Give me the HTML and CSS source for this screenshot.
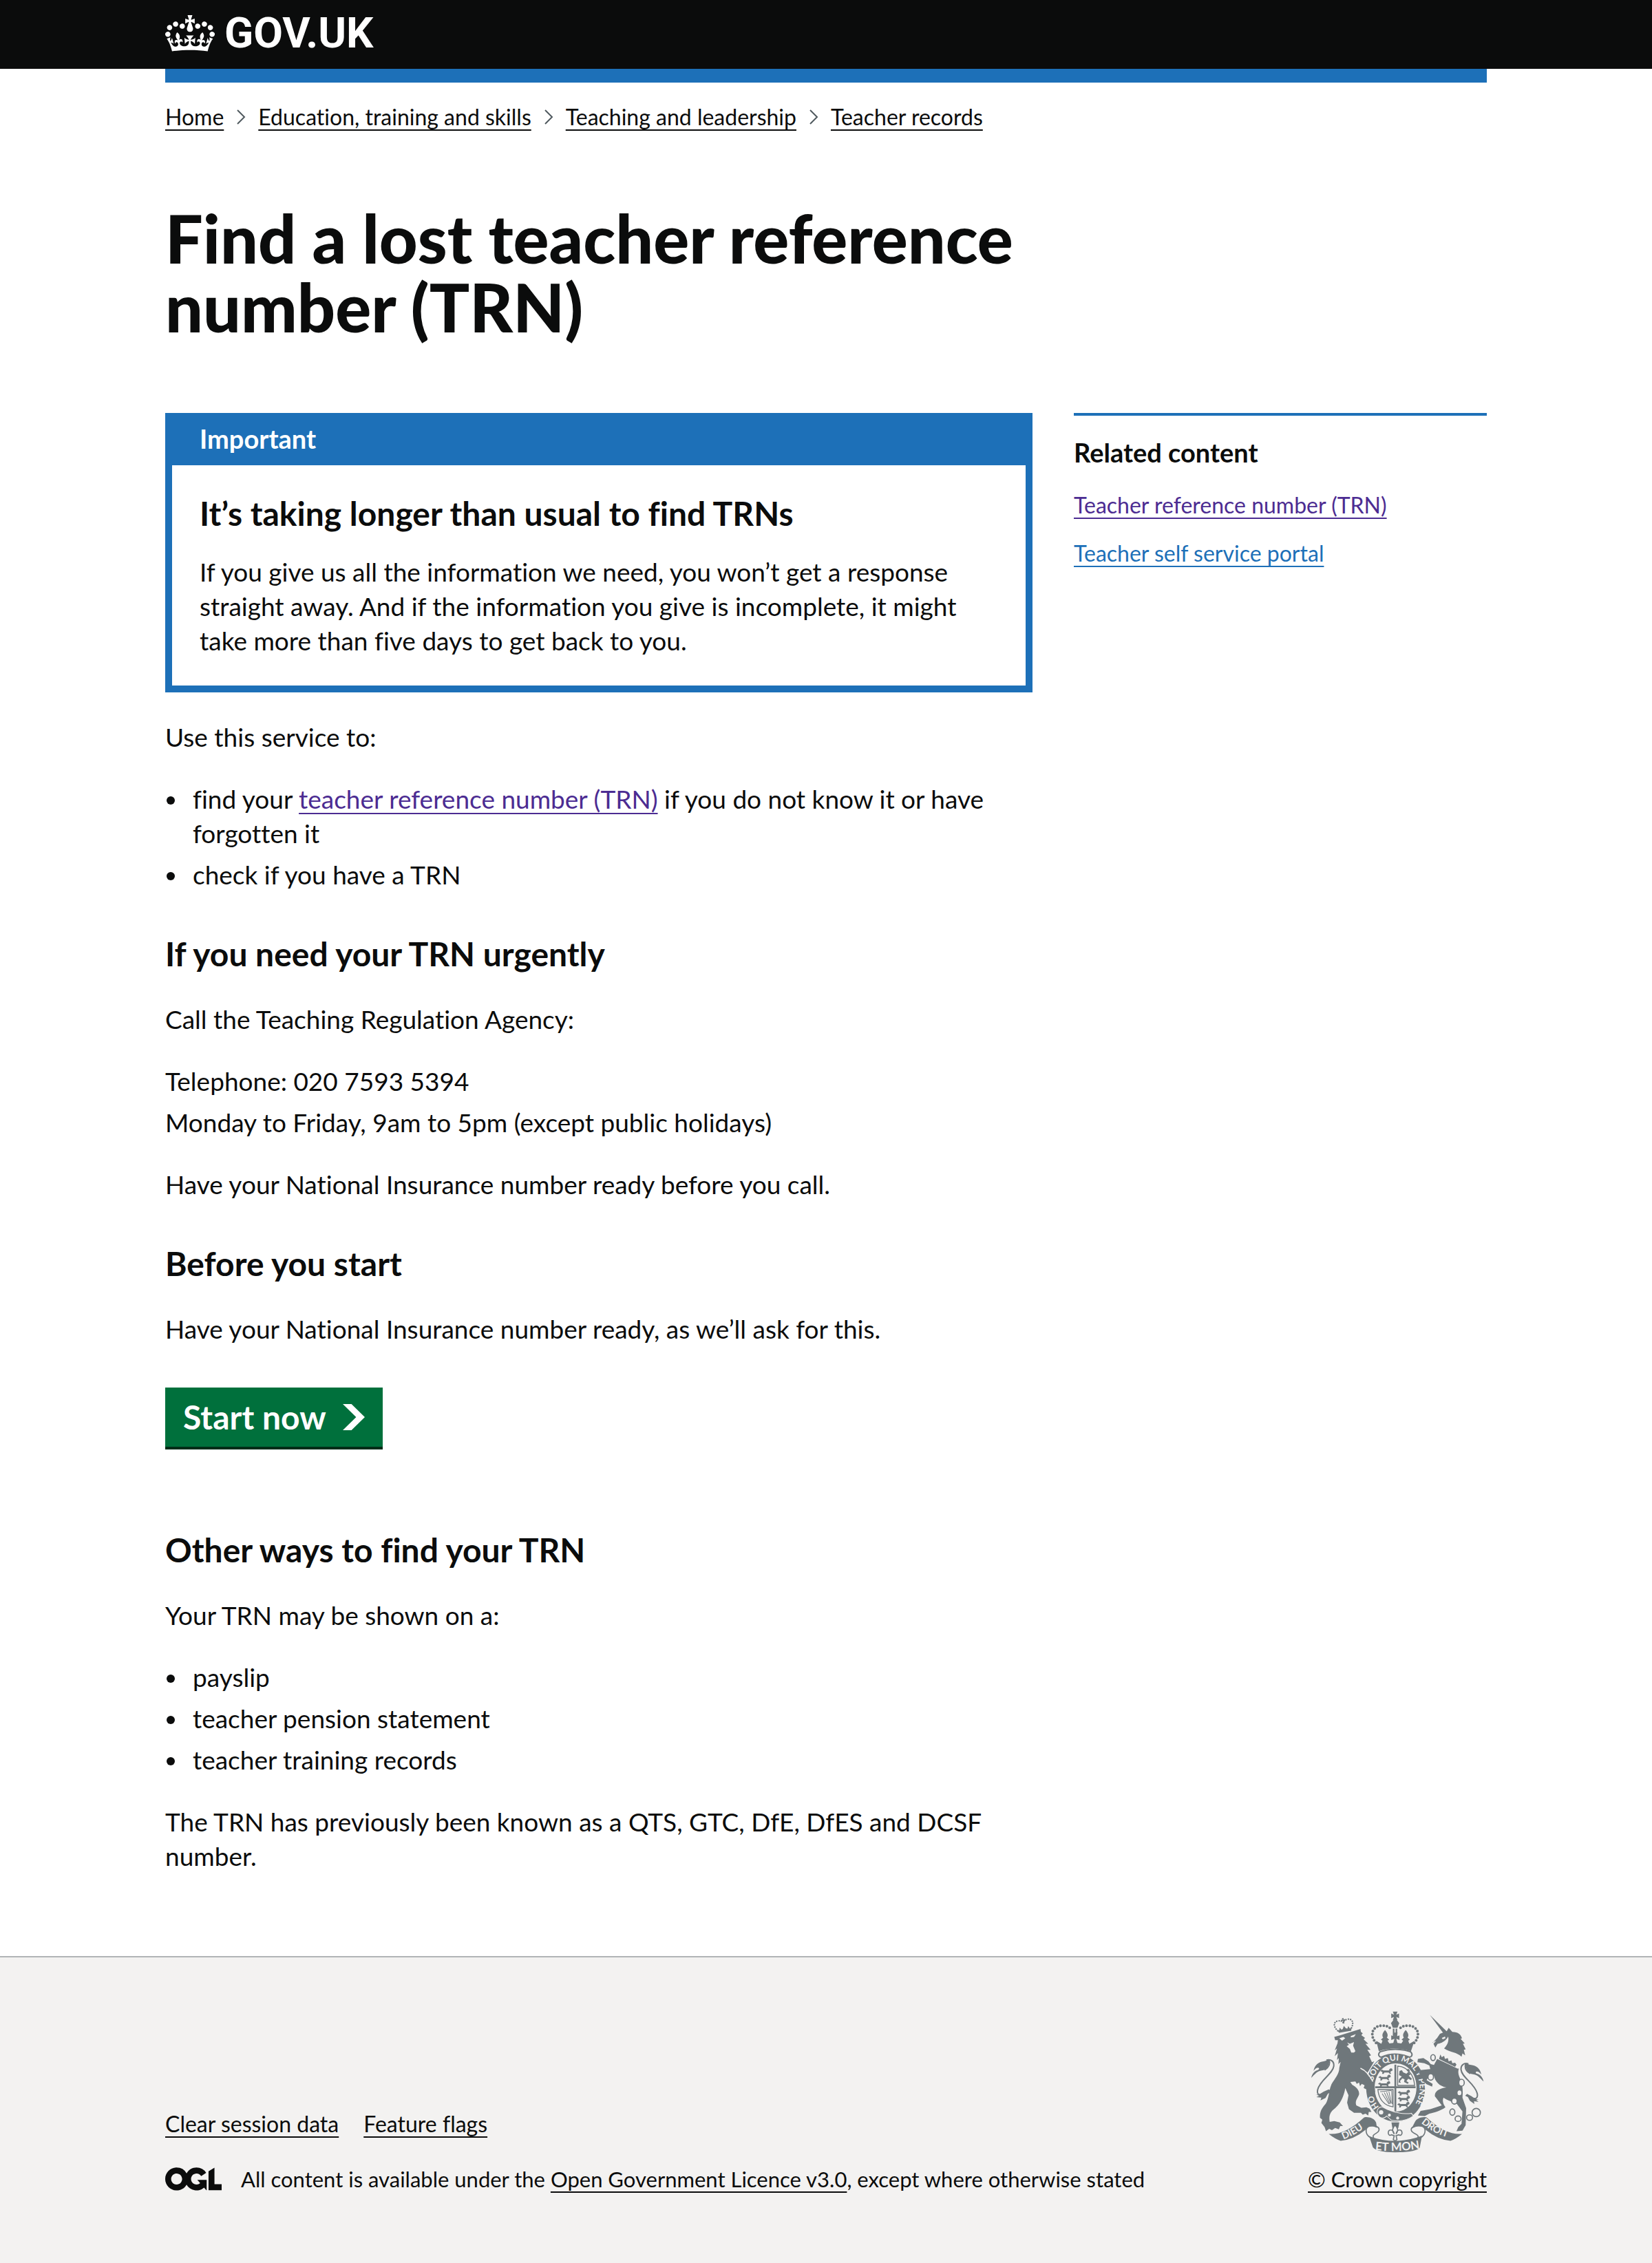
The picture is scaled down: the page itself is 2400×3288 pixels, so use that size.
FILE: index.html
```html
<!DOCTYPE html>
<html lang="en">
<head>
<meta charset="utf-8">
<meta name="viewport" content="width=device-width, initial-scale=1">
<title>Find a lost teacher reference number (TRN) - GOV.UK</title>
<link rel="stylesheet" href="styles.css">
</head>
<body>
<header class="header">
  <div class="container">
    <a class="header-logo" href="#">
      <svg class="header-crown" viewBox="0 0 132 97" aria-hidden="true"><path fill="currentColor" fill-rule="evenodd" d="M25 30.2c3.5 1.5 7.7-.2 9.1-3.7 1.5-3.6-.2-7.8-3.9-9.2-3.6-1.4-7.6.3-9.1 3.9-1.4 3.5.3 7.5 3.9 9zM9 39.5c3.6 1.5 7.8-.2 9.2-3.7 1.5-3.6-.2-7.8-3.9-9.1-3.6-1.5-7.6.2-9.1 3.8-1.4 3.5.3 7.5 3.8 9zM4.4 57.2c3.5 1.5 7.7-.2 9.1-3.8 1.5-3.6-.2-7.7-3.9-9.1-3.5-1.5-7.6.3-9.1 3.8-1.4 3.5.3 7.6 3.9 9.1zm38.3-21.4c3.5 1.5 7.7-.2 9.1-3.8 1.5-3.6-.2-7.7-3.9-9.1-3.6-1.5-7.6.3-9.1 3.8-1.3 3.6.4 7.7 3.9 9.1zm64.4-5.6c-3.6 1.5-7.8-.2-9.1-3.7-1.5-3.6.2-7.8 3.8-9.2 3.6-1.4 7.7.3 9.2 3.9 1.3 3.5-.4 7.5-3.9 9zm15.9 9.3c-3.6 1.5-7.7-.2-9.1-3.7-1.5-3.6.2-7.8 3.7-9.1 3.6-1.5 7.7.2 9.2 3.8 1.5 3.5-.3 7.5-3.8 9zm4.7 17.7c-3.6 1.5-7.8-.2-9.2-3.8-1.5-3.6.2-7.7 3.9-9.1 3.6-1.5 7.7.3 9.2 3.8 1.3 3.5-.4 7.6-3.9 9.1zM89.3 35.8c-3.6 1.5-7.8-.2-9.2-3.8-1.4-3.6.2-7.7 3.9-9.1 3.6-1.5 7.7.3 9.2 3.8 1.4 3.6-.3 7.7-3.9 9.1zM69.7 17.7l8.9 4.7V9.3l-8.9 2.8c-.2-.3-.5-.6-.9-.9L72.4 0H59.6l3.5 11.2c-.3.3-.6.5-.9.9l-8.8-2.8v13.1l8.8-4.7c.3.3.6.7.9.9l-5 15.4v.1c-.2.8-.4 1.6-.4 2.4 0 4.1 3.1 7.5 7 8.1h.2c.3 0 .7.1 1 .1.4 0 .7 0 1-.1h.2c4-.6 7.1-4.1 7.1-8.1 0-.8-.1-1.7-.4-2.4V34l-5.1-15.4c.4-.2.7-.6 1-.9zM66 92.8c16.9 0 32.8 1.1 47.1 3.2 4-16.9 8.9-26.7 14-33.5l-9.6-3.4c1 4.9 1.1 7.2 0 10.2-1.5-1.4-3-4.3-4.2-8.7L108.6 76c2.8-2 5-3.2 7.5-3.3-4.4 9.4-10 11.9-13.6 11.2-4.3-.8-6.3-4.6-5.6-7.9 1-4.7 5.7-5.9 8-.5 4.3-8.7-3-11.4-7.6-8.8 7.1-7.2 7.9-13.5 2.1-21.1-8 6.1-8.1 12.3-4.5 20.8-4.7-5.4-12.1-2.5-9.5 6.2 3.4-5.2 7.9-2 7.2 3.1-.6 4.3-6.4 7.8-13.5 7.2-10.3-.9-10.9-8-11.2-13.8 2.5-.5 7.1 1.8 11 7.3L80.2 60c-4.1 4.4-8 5.3-12.3 5.4 1.4-4.4 8-11.6 8-11.6H55.5s6.4 7.2 7.9 11.6c-4.2-.1-8-1-12.3-5.4l1.4 16.4c3.9-5.5 8.5-7.7 10.9-7.3-.3 5.8-.9 12.8-11.1 13.8-7.2.6-12.9-2.9-13.5-7.2-.7-5 3.8-8.3 7.1-3.1 2.7-8.7-4.6-11.6-9.4-6.2 3.7-8.5 3.6-14.7-4.6-20.8-5.8 7.6-5 13.9 2.2 21.1-4.7-2.6-11.9.1-7.7 8.8 2.3-5.5 7.1-4.2 8.1.5.7 3.3-1.3 7.1-5.7 7.9-3.5.7-9-1.8-13.5-11.2 2.5.1 4.7 1.3 7.5 3.3l-4.7-15.4c-1.2 4.4-2.7 7.2-4.3 8.7-1.1-3-.9-5.3 0-10.2l-9.5 3.4c5 6.9 9.9 16.7 14 33.5 14.8-2.1 30.8-3.2 47.7-3.2z"/></svg>
      <span>GOV.UK</span>
    </a>
  </div>
</header>
<div class="container">
  <div class="header-bar"></div>
  <nav class="breadcrumbs" aria-label="Breadcrumb">
    <ol>
      <li><a class="link" href="#">Home</a></li>
      <li><svg class="crumb-arrow" viewBox="0 0 14 22" aria-hidden="true"><path d="M2 1l10 10L2 21"/></svg><a class="link" href="#">Education, training and skills</a></li>
      <li><svg class="crumb-arrow" viewBox="0 0 14 22" aria-hidden="true"><path d="M2 1l10 10L2 21"/></svg><a class="link" href="#">Teaching and leadership</a></li>
      <li><svg class="crumb-arrow" viewBox="0 0 14 22" aria-hidden="true"><path d="M2 1l10 10L2 21"/></svg><a class="link" href="#">Teacher records</a></li>
    </ol>
  </nav>
  <main class="main">
    <h1 class="title">Find a lost teacher reference number (TRN)</h1>
    <div class="content">
      <section class="banner" aria-labelledby="banner-title">
        <h2 class="banner-title" id="banner-title">Important</h2>
        <div class="banner-body">
          <h3 class="heading">It’s taking longer than usual to find TRNs</h3>
          <p>If you give us all the information we need, you won’t get a response straight away. And if the information you give is incomplete, it might take more than five days to get back to you.</p>
        </div>
      </section>
      <p>Use this service to:</p>
      <ul class="list list-bullet">
        <li>find your <a class="link visited" href="#">teacher reference number (TRN)</a> if you do not know it or have forgotten it</li>
        <li>check if you have a TRN</li>
      </ul>
      <h2 class="heading">If you need your TRN urgently</h2>
      <p>Call the Teaching Regulation Agency:</p>
      <ul class="list">
        <li>Telephone: 020 7593 5394</li>
        <li>Monday to Friday, 9am to 5pm (except public holidays)</li>
      </ul>
      <p>Have your National Insurance number ready before you call.</p>
      <h2 class="heading">Before you start</h2>
      <p>Have your National Insurance number ready, as we’ll ask for this.</p>
      <button class="start-button" type="button">Start now
        <svg viewBox="0 0 33 40" preserveAspectRatio="none" aria-hidden="true"><path fill="currentColor" d="M0 0h13l20 20-20 20H0l20-20z"/></svg>
      </button>
      <h2 class="heading">Other ways to find your TRN</h2>
      <p>Your TRN may be shown on a:</p>
      <ul class="list list-bullet">
        <li>payslip</li>
        <li>teacher pension statement</li>
        <li>teacher training records</li>
      </ul>
      <p>The TRN has previously been known as a QTS, GTC, DfE, DfES and DCSF number.</p>
    </div>
    <aside class="related">
      <h2 class="related-title">Related content</h2>
      <ul>
        <li><a class="link visited" href="#">Teacher reference number (TRN)</a></li>
        <li><a class="link unvisited" href="#">Teacher self service portal</a></li>
      </ul>
    </aside>
  </main>
</div>
<footer class="footer">
  <div class="container footer-row">
    <div class="footer-meta">
      <ul class="footer-links">
        <li><a class="link" href="#">Clear session data</a></li>
        <li><a class="link" href="#">Feature flags</a></li>
      </ul>
      <div class="licence">
        <svg class="ogl" viewBox="0 0 483 196" role="img" aria-label="Open Government Licence"><path fill="currentColor" d="M421.5 142.8V.1l-50.7 32.3v161.1h112.4v-50.7zm-122.3-9.6A47.12 47.12 0 0 1 221 97.8c0-26 21.1-47.1 47.1-47.1 16.7 0 31.4 8.7 39.7 21.8l42.7-27.2A97.63 97.63 0 0 0 268.1 0c-36.5 0-68.3 20.1-85.1 49.7A98 98 0 0 0 97.8 0C43.9 0 0 43.9 0 97.8s43.9 97.8 97.8 97.8c36.5 0 68.3-20.1 85.1-49.7a97.76 97.76 0 0 0 149.6 25.4l19.4 22.2h3v-87.8h-80l24.3 27.5zM97.8 145c-26 0-47.1-21.1-47.1-47.1s21.1-47.1 47.1-47.1 47.1 21.1 47.1 47.1S123.8 145 97.8 145"/></svg>
        <span>All content is available under the <a class="link" href="#">Open Government Licence v3.0</a>, except where otherwise stated</span>
      </div>
    </div>
    <div class="copyright">
      <svg class="crest" viewBox="72 70 752 616" aria-hidden="true">
        <defs>
          <path id="garter-line" d="M368 488A103 119 0 1 1 496 504"/>
          <path id="dieu-line" d="M212 628Q270 606 322 562"/>
          <path id="droit-line" d="M550 556Q604 604 684 624"/>
          <path id="mon-line" d="M350 674Q438 684 530 670"/>
          <g id="lion-passant"><path d="M0 8l8-6 6 4h24l6-5 4 7-4 5 4 8-7-1-4-5H18l-3 6H8l2-8zM38 2l8-6 6 2 2 8-9 4z"/></g>
          <g id="tail"><path d="M72 360c4-22 16-30 28-34 8-3 8-8 2-10-8 0-14 6-20 14 4-26 22-40 44-42 12-2 20-8 26-8-2 22-10 46-34 48-20 2-30 16-46 32z"/><path fill="none" stroke="#6f777b" stroke-width="6" d="M138 283c20-6 34 6 32 26-4 34-60 60-70 102-5 20 6 28 22 20M130 326c16-10 26-24 20-44"/></g>
        </defs>
        <g class="crest-ink">
          <!-- royal crown -->
          <path d="M427 72h20l-5 13 12-5v20l-12-5 5 13h-20l5-13-12 5V80l12 5z"/>
          <path d="M419 122l12-16h12l12 16-8 20h-20z"/>
          <path d="M427 146h7v34h-7zm12 0h7v34h-7z"/>
          <path fill="none" stroke="#6f777b" stroke-width="12" stroke-linecap="round" stroke-dasharray="0 14" d="M354 208C322 172 340 132 382 133c22 0 34 8 40 20M520 208c32-36 14-76-28-75-22 0-34 8-40 20"/>
          <path d="M355 199l22 13 5-14-7-4 10-9c-7-10-3-20 8-33 11 13 15 23 8 33l10 9-7 4 8 12 17-2 5-18-14 5v-20l14 5-6-17h20l-6 17 14-5v20l-14-5 5 18 17 2 8-12-7-4 10-9c-7-10-3-20 8-33 11 13 15 23 8 33l10 9-7 4 5 14 22-13-15 45q-72-22-140 0z"/>
          <path fill="none" stroke="#6f777b" stroke-width="6" d="M372 246c-12 12-6 22 4 24q62-26 124 0c12-2 14-14 4-24q-66-20-132 0z"/>
          <!-- garter -->
          <path fill-rule="evenodd" d="M439 256c72 0 128 64 128 147s-56 147-128 147-128-64-128-147 56-147 128-147zm0 41c-52 0-91 46-91 106s39 104 91 104 91-46 91-106-39-104-91-104z"/>
          <path d="M434 302h8v204h-8zM350 397h176v8H350z"/>
          <path fill="none" stroke="#6f777b" stroke-width="4" d="M448 309c40 2 70 34 74 84h-74zM428 411v75c-38-4-62-32-66-75z"/>
          <use href="#lion-passant" x="372" y="322"/><use href="#lion-passant" x="364" y="350"/><use href="#lion-passant" x="362" y="378"/>
          <use href="#lion-passant" x="448" y="416"/><use href="#lion-passant" x="448" y="442"/><use href="#lion-passant" x="446" y="468"/>
          <path d="M456 330l10-4 6 10 14 6 10-10 8 14-8 4 14 14-4 6-12-6-8 10 10 6-4 6-16-8 2-12-10-4-10 12 4 8-10-2 2-14 12-12-12-6zM486 326l8-6 8 8-8 6z"/>
          <path fill="none" stroke="#6f777b" stroke-width="3" d="M372 420c20 2 30-6 50-4l2 58M380 428l30 46M390 424l24 50M400 422l18 50M410 420l10 50"/>
        </g>
        <text class="crest-letters" font-size="36"><textPath href="#garter-line" startOffset="2">HO</textPath></text>
        <text class="crest-letters" font-size="36"><textPath href="#garter-line" startOffset="122">SOIT QUI MAL Y PENSE</textPath></text>
        <g class="crest-ink crest-edge">
          <!-- buckle and strap -->
          <path d="M380 486c-20 2-26 20-18 34 6 16 28 20 38 6l20 18q54 12 96-18l-8-12q-46 8-104-16z"/>
          <circle cx="412" cy="522" r="5" fill="#f3f2f1"/><circle cx="448" cy="535" r="5" fill="#f3f2f1"/>
          <circle cx="376" cy="510" r="8" fill="#f3f2f1"/>
        </g>
        <g class="crest-ink">
          <!-- lion -->
          <g transform="rotate(-10 214 135)">
            <path fill="none" stroke="#6f777b" stroke-width="7" stroke-linecap="round" stroke-dasharray="0 10" d="M184 150c-18-24-10-42 8-42 12 0 18 4 22 12 4-8 10-12 22-12 18 0 26 18 8 42"/>
            <path d="M211 100h8l-2 7 7-2v8l-7-2 2 12h-8l2-12-7 2v-8l7 2zM182 144l8 6 5-12 6 10 6-2 7-12 7 12 6 2 6-10 5 12 8-6-4 16h-54z"/>
          </g>
          <path d="M172 182C208 172 248 158 286 147L288 160 296 166 290 174 306 186 300 192 320 212 308 212 330 238 316 238 332 262 324 266 336 292 346 288 332 312 314 342C330 362 342 380 348 402L350 424 340 416 334 428 326 416 314 424 312 410 300 404 304 392 292 386 284 396 280 380 270 386 264 376 242 378 250 390C268 400 282 414 280 432 276 448 260 458 268 480L290 490 312 488 326 494 334 508 322 508 320 524 308 516 296 520 288 512 258 512 236 496 228 468 234 436 220 404C214 440 200 470 176 492 154 508 148 524 152 552L172 548 196 554 210 570 198 570 192 584 176 578 162 588 150 582 136 592 130 574 116 556 120 542 110 534C108 506 120 490 134 474 150 448 148 414 160 388 174 364 194 344 194 316L200 290 190 300 192 274 184 282 188 252 174 266 184 232 174 240 186 210 188 196 176 196Z"/>
          <path class="crest-paper" d="M194 188l18-6 8 6-14 10zM244 178l22-8-8 12-14 2zM228 206l12 6 18-8-4 16 10 24-6 6h-12l-6-16-14-12 10-6z"/>
          <path fill="none" stroke="#f3f2f1" stroke-width="5" d="M286 318c24 10 40 30 54 58"/>
          <use href="#tail"/>
          <path d="M90 432c12 4 24-4 36-12l22-10 14 8-18 12-10 18-22 10 4-12-22-2 12-6z"/>
          <!-- unicorn -->
          <path d="M588 86l76 74-14 10z"/>
          <path d="M602 206l18-20 12-18 30-12 8-14 16 18c26 0 38 12 42 28l-6 2 18 20-8 2 12 24-8 2 6 24-12-8-4 14c-20-20-48-18-76-36 14-16 22-30 18-52-12 22-30 28-46 32l-10 16-8-16 12-14-18 8z"/>
          <path class="crest-paper" d="M640 186l14-6 2 8-12 4z"/>
          <path d="M620 278L714 320C708 344 716 352 724 372 732 400 732 420 730 446L746 492 744 566 730 590 704 592 712 574 726 560 730 506 706 474C684 462 662 458 648 446 640 460 648 476 656 488 634 504 604 512 586 516L566 526 536 524 548 504 590 496 640 480 610 440C608 420 626 406 660 402 628 396 612 376 606 352L582 356 574 370 600 386 598 398 574 388 560 376 552 350 540 340 546 326 590 322 586 306 564 296 534 292 536 278 560 274 582 288 592 300 606 304Z"/>
          <g fill="#f3f2f1" stroke="#6f777b" stroke-width="5">
            <ellipse cx="602" cy="272" rx="10" ry="13"/><ellipse cx="592" cy="356" rx="12" ry="14"/><ellipse cx="726" cy="381" rx="12" ry="15"/><ellipse cx="717" cy="425" rx="11" ry="13"/><ellipse cx="695" cy="461" rx="12" ry="13"/><ellipse cx="686" cy="509" rx="11" ry="14"/><ellipse cx="711" cy="538" rx="13" ry="12"/><ellipse cx="761" cy="533" rx="13" ry="12"/><circle cx="790" cy="511" r="18"/>
          </g>
          <path class="crest-paper" d="M624 248l14 2 6 8 8-2 6 10 10-4 6 12 10-4 6 12 10-4 8 10 16-2-14 34-88-42z"/>
          <path d="M634 258l6 12 10-6 4 14 12-4 4 14 12-4 4 12 12-2 6 8-6 10-70-34z"/>
          <use href="#tail" transform="matrix(-1 0 0 1 894 16)"/>
          <path d="M804 452c-12 4-24-4-34-12l-20-10-8 8 12 6 8 16 20 14-2-12 20 2-10-8z"/>
          <!-- ribbon -->
          <path d="M148 604q70 6 154-72c20-4 44 4 52 22l4 24c-20-12-42-10-50 8q-50 42-108 48-24-8-52-30z"/>
          <path d="M728 604q-70 6-154-72c-20-4-44 4-52 22l-14 28c28-16 52-18 62 4q50 42 108 48 24-8 50-30z"/>
          <path d="M324 614q114 42 230-2l-10 52q-18 20-108 20-80 0-96-22z"/>
          <path fill="none" stroke="#6f777b" stroke-width="5" d="M330 620c-26-14-24-46-4-50 24-4 46 2 40 20-4 14-34 14-22 32M548 620c26-14 24-46 4-50-24-4-50 2-44 20 4 14 36 14 28 32"/>
          <path d="M421 554h34l-4 24H425z"/>
          <path fill="#f3f2f1" stroke="#6f777b" stroke-width="5" d="M437 566c-14 14-14 24-4 38-6-24-26-20-26-4 0 10 8 12 14 8l12 4-4 16 8 8 8-8-4-16 12-4c6 4 14 2 14-8 0-16-20-20-26 4 10-14 10-24-4-38z"/>
        </g>
        <text class="crest-letters" font-size="42"><textPath href="#dieu-line">DIEU</textPath></text>
        <text class="crest-letters" font-size="42"><textPath href="#droit-line">DROIT</textPath></text>
        <text class="crest-letters" font-size="50"><textPath href="#mon-line">ET MON</textPath></text>
      </svg>
      <a class="link" href="#">© Crown copyright</a>
    </div>
  </div>
</footer>
</body>
</html>
```
FILE: styles.css
```css
* {
  box-sizing: border-box;
}

body {
  margin: 0;
  background: #fff;
  color: #0b0c0c;
  font-family: Lato, "Liberation Sans", sans-serif;
  font-size: 37px;
  font-variant-ligatures: none;
  line-height: 50px;
}

h1, h2, h3, p, ul, ol {
  margin: 0;
  padding: 0;
}

.container {
  max-width: 2080px;
  margin: 0 auto;
  padding: 0 80px;
}

.link {
  color: inherit;
  text-decoration: underline;
  text-decoration-thickness: 2px;
  text-underline-offset: 6px;
}

.visited {
  color: #4c2c92;
}

.unvisited {
  color: #1d70b8;
}

/* Header */

.header {
  background: #0b0c0c;
}

.header-logo {
  display: inline-flex;
  align-items: center;
  gap: 14px;
  height: 100px;
  padding-bottom: 4px;
  color: #fff;
  font-family: Roboto, sans-serif;
  font-size: 62px;
  font-weight: 700;
  text-decoration: none;
}

.header-crown {
  width: 72px;
  height: 53px;
}

.header-bar {
  height: 20px;
  background: #1d70b8;
}

.breadcrumbs {
  padding: 30px 0 0;
  font-size: 32px;
  line-height: 40px;
}

.breadcrumbs ol,
.breadcrumbs li {
  display: flex;
  align-items: center;
  gap: 18px;
  list-style: none;
}

.crumb-arrow {
  width: 14px;
  height: 22px;
  fill: none;
  stroke: #505a5f;
  stroke-width: 2;
}

/* Main content */

.main {
  display: grid;
  grid-template-columns: 21fr 10fr;
  column-gap: 60px;
  padding: 106px 0 80px;
}

.title {
  grid-column: 1;
  margin-bottom: 104px;
  font-size: 97px;
  font-weight: 900;
  line-height: 100px;
}

.content,
.related {
  grid-row: 2;
}

.content p,
.list {
  margin-bottom: 40px;
}

.heading {
  margin: 60px 0 40px;
  font-size: 48px;
  line-height: 60px;
}

.banner {
  margin-bottom: 40px;
  border: 10px solid #1d70b8;
}

.banner-title {
  padding: 2px 40px 14px;
  background: #1d70b8;
  color: #fff;
  font-size: 38px;
  line-height: 50px;
}

.banner-body {
  padding: 40px;
}

.banner-body .heading {
  margin: 0 0 30px;
}

.banner-body p {
  margin: 0;
}

.list {
  list-style: none;
}

.list li + li {
  margin-top: 10px;
}

.list-bullet {
  padding-left: 40px;
}

.list-bullet li::before {
  content: "";
  display: inline-block;
  width: 12px;
  height: 12px;
  margin: 0 26px 0 -38px;
  border-radius: 50%;
  background: currentColor;
  vertical-align: 6px;
}

.start-button {
  display: flex;
  align-items: center;
  gap: 24px;
  margin: 60px 0 120px;
  padding: 13px 26px;
  border: 0;
  background: #00703c;
  box-shadow: 0 4px 0 #002d18;
  color: #fff;
  font-family: inherit;
  font-size: 48px;
  font-weight: 700;
  line-height: 60px;
}

.start-button svg {
  width: 32px;
  height: 38px;
}

/* Related content */

.related {
  padding-top: 28px;
  border-top: 4px solid #1d70b8;
  font-size: 32px;
  line-height: 40px;
}

.related-title {
  margin-bottom: 32px;
  font-size: 38px;
  line-height: 50px;
}

.related ul {
  display: grid;
  gap: 30px;
  list-style: none;
}

/* Footer */

.footer {
  padding: 78px 0 104px;
  border-top: 2px solid #b1b4b6;
  background: #f3f2f1;
  font-size: 32px;
  line-height: 40px;
}

.footer-row {
  display: flex;
  justify-content: space-between;
  align-items: flex-end;
}

.footer-meta {
  display: grid;
  gap: 40px;
}

.footer-links {
  display: flex;
  gap: 36px;
  list-style: none;
}

.licence {
  display: flex;
  align-items: center;
  gap: 28px;
}

.licence,
.copyright {
  font-size: 31px;
}

.ogl {
  width: 82px;
  height: 34px;
}

.copyright {
  display: grid;
  justify-items: center;
  gap: 18px;
}

.crest {
  width: 251px;
  height: 206px;
}

.crest-ink {
  fill: #6f777b;
}

.crest-edge {
  stroke: #f3f2f1;
  stroke-width: 3;
}

.crest-paper,
.crest-letters {
  fill: #f3f2f1;
}

.crest-letters {
  font-weight: 700;
}
```
